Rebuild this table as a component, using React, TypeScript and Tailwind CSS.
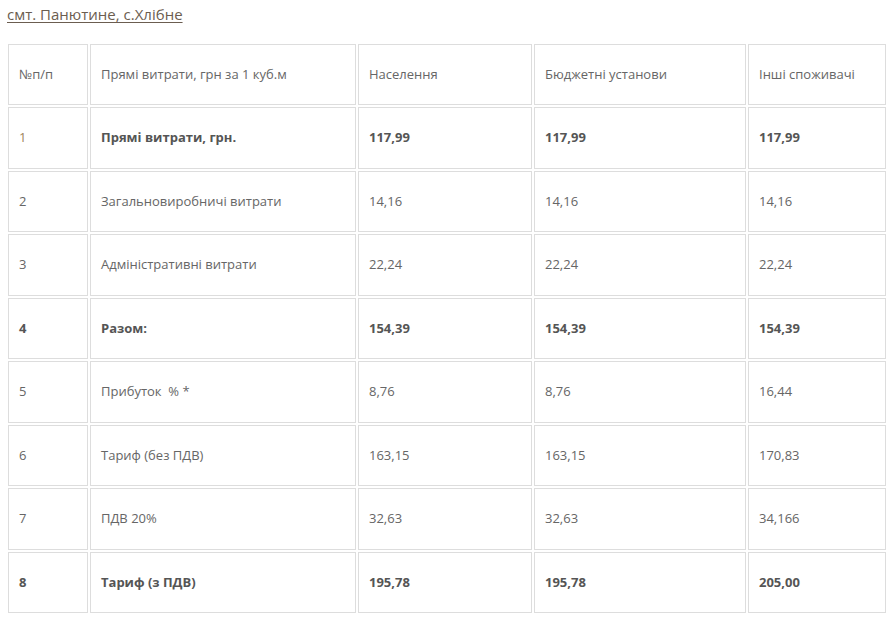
export default function App() {
    const rows = [
        { n: '1', name: 'Прямі витрати, грн.', a: '117,99', b: '117,99', c: '117,99', bold: 'name' },
        { n: '2', name: 'Загальновиробничі витрати', a: '14,16', b: '14,16', c: '14,16' },
        { n: '3', name: 'Адміністративні витрати', a: '22,24', b: '22,24', c: '22,24' },
        { n: '4', name: 'Разом:', a: '154,39', b: '154,39', c: '154,39', bold: 'all' },
        { n: '5', name: 'Прибуток  % *', a: '8,76', b: '8,76', c: '16,44' },
        { n: '6', name: 'Тариф (без ПДВ)', a: '163,15', b: '163,15', c: '170,83' },
        { n: '7', name: 'ПДВ 20%', a: '32,63', b: '32,63', c: '34,166' },
        { n: '8', name: 'Тариф (з ПДВ)', a: '195,78', b: '195,78', c: '205,00', bold: 'all' },
    ];

    const cell = 'border border-[#dddddd] px-[10px] py-[20px] text-left align-middle leading-[19.5px] whitespace-pre';

    return (
        <div className="min-h-screen bg-white font-['Open_Sans',sans-serif] text-[13px] text-[#666666]">
            <div className="px-[7px] pt-[4px]">
                <a href="#" className="text-[15px] leading-[20px] text-[#6b5d50] underline underline-offset-2">
                    смт. Панютине, с.Хлібне
                </a>
            </div>

            {/* Table */}
            <table className="mt-[16px] ml-[6px] table-fixed border-separate border-spacing-[2px] w-[882px]">
                <colgroup>
                    <col className="w-[80px]" />
                    <col className="w-[266px]" />
                    <col className="w-[174px]" />
                    <col className="w-[212px]" />
                    <col className="w-[138px]" />
                </colgroup>
                <tbody>
                    <tr>
                        <td className={cell}>№п/п</td>
                        <td className={cell}>Прямі витрати, грн за 1 куб.м</td>
                        <td className={cell}>Населення</td>
                        <td className={cell}>Бюджетні установи</td>
                        <td className={cell}>Інші споживачі</td>
                    </tr>
                    {rows.map((r) => {
                        const allBold = r.bold === 'all';
                        const b = r.bold ? 'font-bold text-[#555555]' : '';
                        return (
                            <tr key={r.n}>
                                <td className={`${cell} ${allBold ? 'font-bold text-[#555555]' : ''} ${r.n === '1' ? 'text-[#a0855b]' : ''}`}>
                                    {r.n}
                                </td>
                                <td className={`${cell} ${b}`}>{r.name}</td>
                                <td className={`${cell} ${b}`}>{r.a}</td>
                                <td className={`${cell} ${b}`}>{r.b}</td>
                                <td className={`${cell} ${b}`}>{r.c}</td>
                            </tr>
                        );
                    })}
                </tbody>
            </table>
        </div>
    );
}
